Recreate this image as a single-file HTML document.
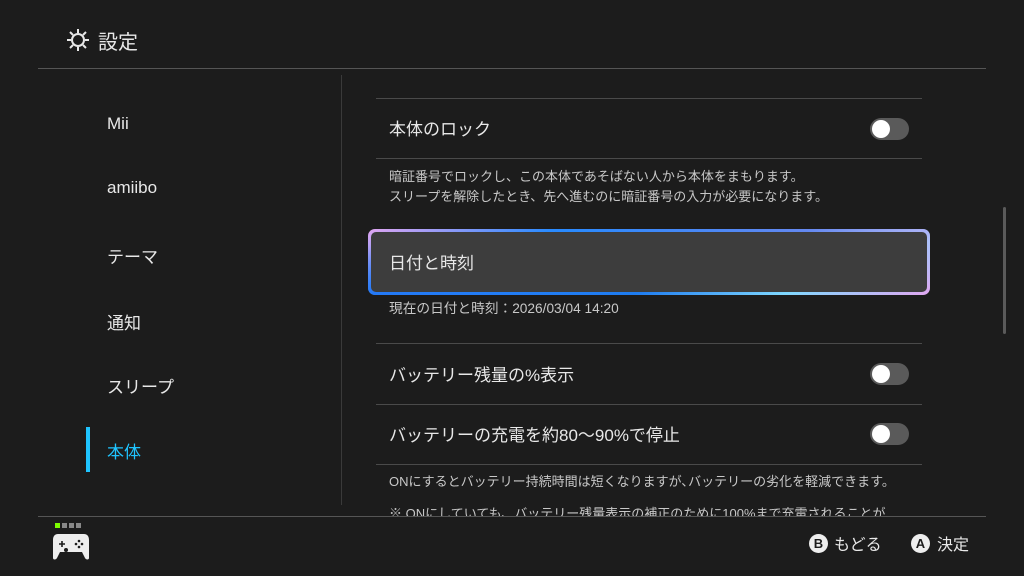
<!DOCTYPE html>
<html><head><meta charset="utf-8"><style>
*{margin:0;padding:0;box-sizing:border-box}
body{width:1024px;height:576px;background:#1c1c1c;font-family:"Liberation Sans","Noto Sans CJK JP",sans-serif;color:#e8e8e8;position:relative;overflow:hidden}
.a{position:absolute;white-space:nowrap}
.hl{position:absolute;height:1px;background:#4a4a4a}
.tg{position:absolute;left:870px;width:39px;height:22px;border-radius:11px;background:#5a5a5a}
.tg:after{content:"";position:absolute;left:2px;top:2px;width:18px;height:18px;border-radius:50%;background:#fff}
.side{font-size:17px;left:107px}
.row{font-size:17px;left:389px}
.desc{font-size:13px;color:#c8c8c8;left:389px}
</style></head><body>
<svg class="a" style="left:65px;top:27px" width="26" height="26" viewBox="0 0 26 26" fill="none" stroke="#e8e8e8" stroke-width="2"><circle cx="13" cy="13" r="6"/><path d="M13 2v4M13 20v4M2 13h4M20 13h4M5 5l3 3M18 18l3 3M21 5l-3 3M8 18l-3 3"/></svg>
<div class="a" style="left:98px;top:26px;font-size:20px">設定</div>
<div class="hl" style="left:38px;top:68px;width:948px;background:#555"></div>
<div class="a" style="left:341px;top:75px;width:1px;height:430px;background:#3a3a3a"></div>
<div class="a side" style="top:114px">Mii</div>
<div class="a side" style="top:178px">amiibo</div>
<div class="a side" style="top:243px">テーマ</div>
<div class="a side" style="top:309px">通知</div>
<div class="a side" style="top:373px">スリープ</div>
<div class="a side" style="top:438px;color:#1fc4ff">本体</div>
<div class="a" style="left:86px;top:427px;width:4px;height:45px;background:#1fc4ff"></div>
<div class="hl" style="left:376px;top:98px;width:546px"></div>
<div class="a row" style="top:115px">本体のロック</div>
<div class="tg" style="top:118px"></div>
<div class="hl" style="left:376px;top:158px;width:546px"></div>
<div class="a desc" style="top:166px">暗証番号でロックし、この本体であそばない人から本体をまもります。</div>
<div class="a desc" style="top:186px">スリープを解除したとき、先へ進むのに暗証番号の入力が必要になります。</div>
<div class="a" style="left:368px;top:229px;width:562px;height:66px;border-radius:7px;background:linear-gradient(160deg,#e3a6f0 0%,#2a8bff 25%,#1e7cf0 60%,#7fd8ff 80%,#e3a6f0 100%)"></div>
<div class="a" style="left:368px;top:229px;width:562px;height:66px;border-radius:7px;background:linear-gradient(10deg,#1e6cf0 0%,rgba(0,0,0,0) 30%,rgba(0,0,0,0) 60%,rgba(230,160,240,.9) 100%);opacity:.6"></div>
<div class="a" style="left:371px;top:232px;width:556px;height:60px;border-radius:5px;background:#3d3d3d"></div>
<div class="a row" style="top:249px">日付と時刻</div>
<div class="a desc" style="top:297px;font-size:13.7px">現在の日付と時刻：2026/03/04 14:20</div>
<div class="hl" style="left:376px;top:343px;width:546px"></div>
<div class="a row" style="top:361px">バッテリー残量の%表示</div>
<div class="tg" style="top:363px"></div>
<div class="hl" style="left:376px;top:404px;width:546px"></div>
<div class="a row" style="top:421px">バッテリーの充電を約80〜90%で停止</div>
<div class="tg" style="top:423px"></div>
<div class="hl" style="left:376px;top:464px;width:546px"></div>
<div class="a desc" style="top:471px">ONにするとバッテリー持続時間は短くなりますが､バッテリーの劣化を軽減できます。</div>
<div class="a desc" style="top:503px;height:13px;overflow:hidden">※ ONにしていても、バッテリー残量表示の補正のために100%まで充電されることが</div>
<div class="a" style="left:1003px;top:207px;width:3px;height:127px;background:#5a5a5a;border-radius:2px"></div>
<div class="hl" style="left:38px;top:516px;width:948px;background:#555"></div>
<div class="a" style="left:55px;top:523px;width:5px;height:5px;background:#7dfc00"></div>
<div class="a" style="left:62px;top:523px;width:5px;height:5px;background:#888"></div>
<div class="a" style="left:69px;top:523px;width:5px;height:5px;background:#888"></div>
<div class="a" style="left:76px;top:523px;width:5px;height:5px;background:#888"></div>
<svg class="a" style="left:52px;top:532px" width="38" height="28" viewBox="0 0 38 28"><path d="M6 2h26c3 0 5 2 5 6v18c0 2-3 2-4 0l-3-6H8l-3 6c-1 2-4 2-4 0V8c0-4 2-6 5-6z" fill="#eee"/><path d="M10 9v6M7 12h6" stroke="#1c1c1c" stroke-width="1.6"/><circle cx="27" cy="9" r="1.3" fill="#1c1c1c"/><circle cx="24" cy="12" r="1.3" fill="#1c1c1c"/><circle cx="30" cy="12" r="1.3" fill="#1c1c1c"/><circle cx="27" cy="15" r="1.3" fill="#1c1c1c"/><circle cx="14" cy="18" r="2" fill="#1c1c1c"/></svg>
<div class="a" style="left:809px;top:534px;width:19px;height:19px;border-radius:50%;background:#eee;color:#1c1c1c;font-size:13px;font-weight:bold;text-align:center;line-height:19px">B</div>
<div class="a" style="left:834px;top:531px;font-size:16px">もどる</div>
<div class="a" style="left:911px;top:534px;width:19px;height:19px;border-radius:50%;background:#eee;color:#1c1c1c;font-size:13px;font-weight:bold;text-align:center;line-height:19px">A</div>
<div class="a" style="left:937px;top:531px;font-size:16px">決定</div>
</body></html>
